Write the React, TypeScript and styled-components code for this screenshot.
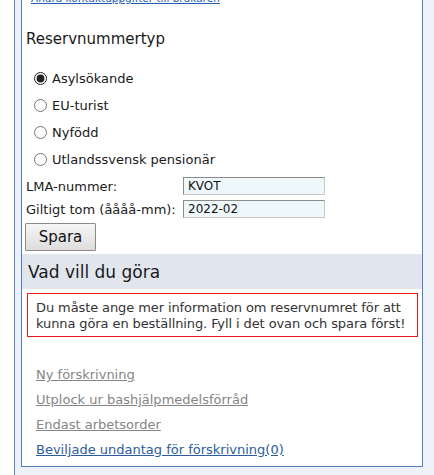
import styled, { createGlobalStyle } from "styled-components";

const GlobalStyle = createGlobalStyle`
    html, body {
        margin: 0;
        padding: 0;
        background: #ffffff;
        overflow: hidden;
    }
    body {
        font-family: "DejaVu Sans", Verdana, sans-serif;
        color: #222222;
    }
`;

const Outer = styled.div`
    margin-left: 14px;
    min-height: 100vh;
    box-sizing: border-box;
    border-left: 1px solid #5d8bc4;
    background: #eef2f8;
    padding: 0 11px 20px 6px;
`;

const Panel = styled.div`
    background: #ffffff;
    border: 1px solid #4f7fbf;
    border-top: none;
    padding-bottom: 8px;
    display: flex;
    flex-direction: column;
`;

const TopLink = styled.a`
    margin: -8px 0 0 9px;
    font-size: 10.5px;
    line-height: 12px;
    color: #1f5fae;
    text-decoration: underline;
    cursor: pointer;
`;

const SectionTitle = styled.div`
    margin: 25px 0 0 4px;
    font-size: 15px;
    line-height: 20px;
    color: #1a1a1a;
`;

const RadioList = styled.div`
    display: flex;
    flex-direction: column;
    gap: 8px;
    margin: 20px 0 0 12px;
`;

const RadioRow = styled.label`
    display: flex;
    align-items: center;
    gap: 5px;
    font-size: 13px;
    line-height: 19px;
    color: #1a1a1a;
    cursor: pointer;

    input {
        margin: 0;
        width: 13px;
        height: 13px;
        accent-color: #222222;
    }
`;

const FieldGrid = styled.div`
    display: grid;
    grid-template-columns: 157px 142px;
    row-gap: 5px;
    align-items: center;
    margin: 8px 0 0 4px;
`;

const FieldLabel = styled.div`
    font-size: 13px;
    color: #1a1a1a;
`;

const FieldInput = styled.input`
    box-sizing: border-box;
    width: 142px;
    height: 18px;
    padding: 0 4px;
    border: 1px solid #8c8c8c;
    border-right-color: #c8c8c8;
    border-bottom-color: #c8c8c8;
    background: #eef7f9;
    font-family: "DejaVu Sans", Verdana, sans-serif;
    font-size: 12px;
    color: #111111;
    outline: none;
`;

const SaveButton = styled.button`
    align-self: flex-start;
    margin: 5px 0 0 3px;
    width: 71px;
    height: 28px;
    border: 1px solid #8a8a8a;
    border-radius: 1px;
    background: linear-gradient(#f6f6f6, #dddddd);
    font-family: "DejaVu Sans", Verdana, sans-serif;
    font-size: 15px;
    color: #111111;
    cursor: pointer;
`;

const ActionHeader = styled.div`
    margin-top: 3px;
    height: 35px;
    background: #e1e6ee;
    display: flex;
    align-items: center;
    padding-left: 6px;
    font-size: 17px;
    color: #1a1a1a;
`;

const WarningBox = styled.div`
    margin: 4px 4px 0 5px;
    border: 1px solid #e8181c;
    padding: 6px 0 4px 8px;
    font-size: 13px;
    line-height: 16px;
    letter-spacing: -0.1px;
    color: #333333;
`;

const LinkList = styled.div`
    display: flex;
    flex-direction: column;
    gap: 8px;
    margin: 29px 0 0 14px;
`;

const ActionLink = styled.a<{ $disabled?: boolean }>`
    align-self: flex-start;
    font-size: 13px;
    line-height: 17px;
    color: ${(p) => (p.$disabled ? "#858585" : "#2a5c9e")};
    text-decoration: underline;
    cursor: ${(p) => (p.$disabled ? "default" : "pointer")};
`;

const radios = ["Asylsökande", "EU-turist", "Nyfödd", "Utlandssvensk pensionär"];

export default function App() {
    return (
        <>
            <GlobalStyle />
            <Outer>
                <Panel>
                    <TopLink>Ändra kontaktuppgifter till brukaren</TopLink>
                    <SectionTitle>Reservnummertyp</SectionTitle>
                    <RadioList>
                        {radios.map((r, i) => (
                            <RadioRow key={r}>
                                <input type="radio" name="typ" defaultChecked={i === 0} />
                                {r}
                            </RadioRow>
                        ))}
                    </RadioList>
                    <FieldGrid>
                        <FieldLabel>LMA-nummer:</FieldLabel>
                        <FieldInput defaultValue="KVOT" />
                        <FieldLabel>Giltigt tom (åååå-mm):</FieldLabel>
                        <FieldInput defaultValue="2022-02" />
                    </FieldGrid>
                    <SaveButton>Spara</SaveButton>
                    <ActionHeader>Vad vill du göra</ActionHeader>
                    <WarningBox>
                        Du måste ange mer information om reservnumret för att kunna göra en beställning. Fyll i det ovan och spara först!
                    </WarningBox>
                    <LinkList>
                        <ActionLink $disabled>Ny förskrivning</ActionLink>
                        <ActionLink $disabled>Utplock ur bashjälpmedelsförråd</ActionLink>
                        <ActionLink $disabled>Endast arbetsorder</ActionLink>
                        <ActionLink>Beviljade undantag för förskrivning(0)</ActionLink>
                    </LinkList>
                </Panel>
            </Outer>
        </>
    );
}
